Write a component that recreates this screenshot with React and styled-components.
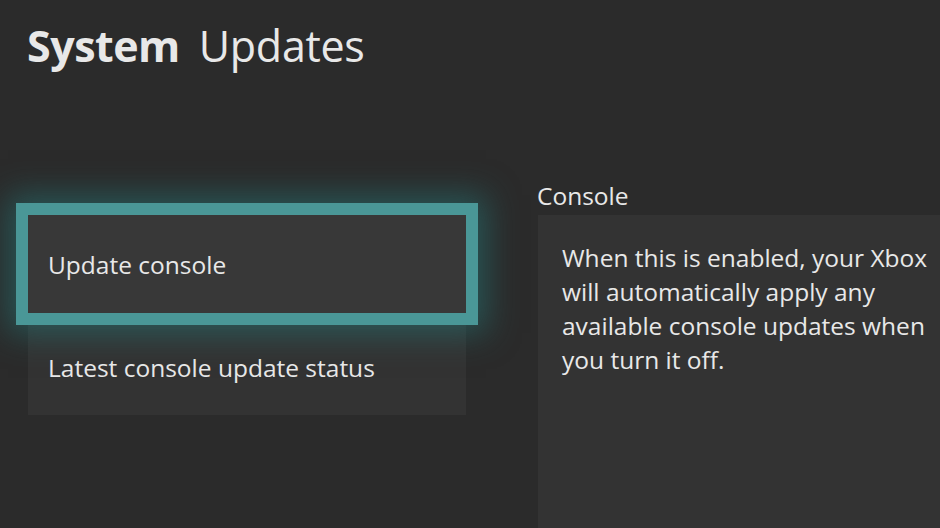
import React from "react"
import styled, { createGlobalStyle } from "styled-components"

const bgColor = "#2b2b2b"
const textColor = "#e8e8e8"
const focusColor = "#4a9797"
const itemBg = "#333333"
const itemFocusBg = "#383838"

const GlobalStyle = createGlobalStyle`
    html, body {
        margin: 0;
        padding: 0;
        background: ${bgColor};
    }
    body {
        font-family: "Open Sans", "Noto Sans", sans-serif;
        color: ${textColor};
        -webkit-font-smoothing: antialiased;
    }
`

const Page = styled.div`
    width: 940px;
    height: 528px;
    overflow: hidden;
    box-sizing: border-box;
    padding: 16px 0 0 27px;
`

const Title = styled.h1`
    margin: 0;
    font-size: 43px;
    line-height: 60px;
    font-weight: 400;
    letter-spacing: -0.3px;
    display: flex;
    gap: 19px;

    b {
        font-weight: 700;
        letter-spacing: -0.5px;
    }
`

const Content = styled.div`
    display: flex;
    gap: 72px;
    margin-top: 101px;
    margin-left: 1px;
`

const MenuList = styled.div`
    width: 438px;
    display: flex;
    flex-direction: column;
    gap: 12px;
    padding-top: 38px;
`

// focused row is a bit taller and carries the teal ring + glow
const MenuItem = styled.div`
    position: relative;
    z-index: ${props => props.focused ? 2 : 1};
    height: ${props => props.focused ? 98 : 90}px;
    box-sizing: border-box;
    display: flex;
    align-items: center;
    padding: 0 0 ${props => props.focused ? 0 : 6}px 20px;
    font-size: 24.5px;
    background-color: ${props => props.focused ? itemFocusBg : itemBg};
    box-shadow: ${props => props.focused
        ? `0 0 0 12px ${focusColor}, 0 0 30px 20px rgba(36, 122, 122, 0.55)`
        : "none"};
`

const Detail = styled.div`
    flex: 1;
    display: flex;
    flex-direction: column;
`

const DetailLabel = styled.div`
    font-size: 24.5px;
    line-height: 38px;
    margin-left: -1px;
`

const DetailPanel = styled.div`
    height: 320px;
    background-color: ${itemBg};
    padding: 26px 0 0 24px;
    box-sizing: border-box;
    font-size: 24.5px;
    line-height: 34px;
    white-space: nowrap;
`

export default function App() {
    return (
        <>
            <GlobalStyle />
            <Page>
                <Title><b>System</b><span>Updates</span></Title>
                <Content>
                    <MenuList>
                        <MenuItem focused>Update console</MenuItem>
                        <MenuItem>Latest console update status</MenuItem>
                    </MenuList>
                    <Detail>
                        <DetailLabel>Console</DetailLabel>
                        <DetailPanel>
                            When this is enabled, your Xbox<br />
                            will automatically apply any<br />
                            available console updates when<br />
                            you turn it off.
                        </DetailPanel>
                    </Detail>
                </Content>
            </Page>
        </>
    )
}
